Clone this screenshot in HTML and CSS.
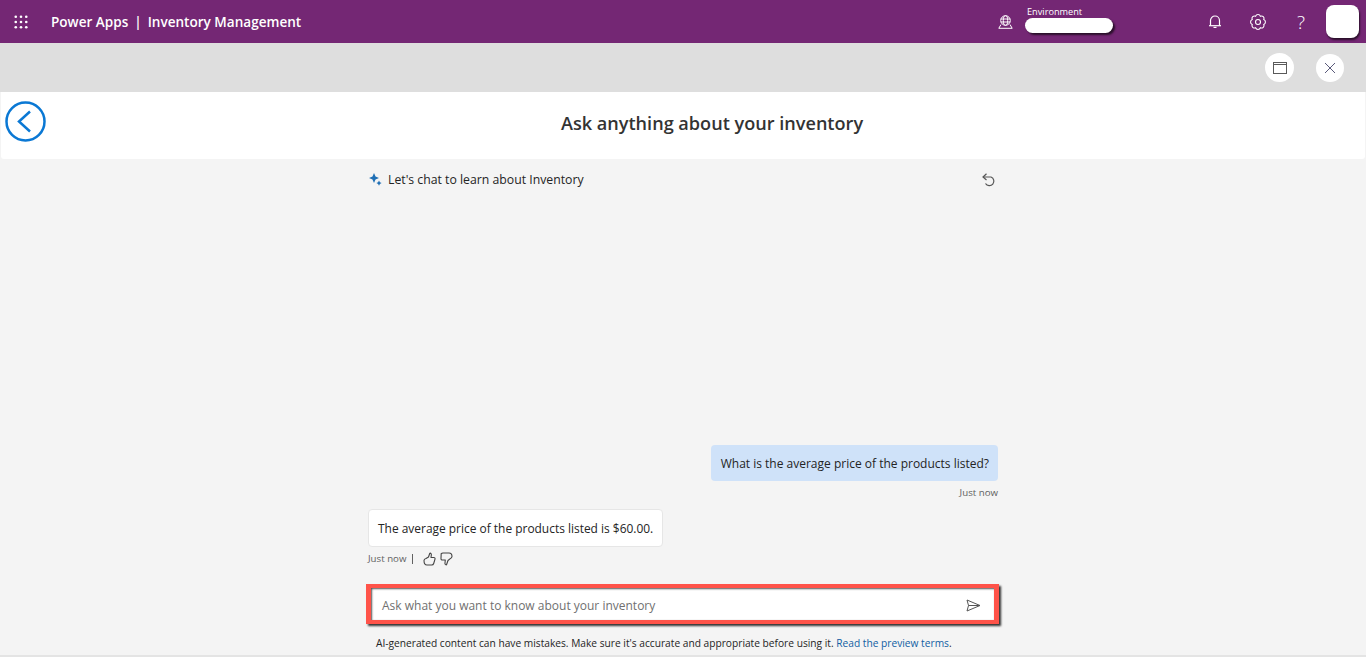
FILE: index.html
```html
<!DOCTYPE html>
<html lang="en">
<head>
<meta charset="utf-8">
<title>Inventory Management</title>
<link rel="stylesheet" href="styles.css">
</head>
<body>
<header class="topbar">
  <svg class="waffle" width="16" height="16" viewBox="0 0 16 16" fill="#fff"><circle cx="2" cy="2" r="1.5"/><circle cx="8" cy="2" r="1.5"/><circle cx="14" cy="2" r="1.5"/><circle cx="2" cy="8" r="1.5"/><circle cx="8" cy="8" r="1.5"/><circle cx="14" cy="8" r="1.5"/><circle cx="2" cy="14" r="1.5"/><circle cx="8" cy="14" r="1.5"/><circle cx="14" cy="14" r="1.5"/></svg>
  <div class="brand"><span>Power Apps</span><span class="sep">|</span><span>Inventory Management</span></div>
  <div class="env">
    <svg width="15" height="14" viewBox="0 0 15 14" fill="none" stroke="#fff" stroke-width="1"><circle cx="7.500" cy="5.500" r="4.800"/><ellipse cx="7.500" cy="5.500" rx="2.200" ry="4.800"/><path d="M2.800 4h9.400M2.800 7h9.400M3 9.500.8 13.300h13.400L12 9.500"/></svg>
    <div class="env-text"><div class="env-label">Environment</div><div class="env-pill"></div></div>
  </div>
  <div class="top-icons">
    <svg width="14" height="15" viewBox="0 0 14 15" fill="none" stroke="#fff" stroke-width="1.200"><path d="M2.500 11.500V6.500a4.500 4.500 0 0 1 9 0v5"/><path d="M1 11.700h12"/><path d="M5.500 13.400h3"/></svg>
    <svg width="16" height="16" viewBox="0 0 16 16" fill="none" stroke="#fff" stroke-width="1.100"><path d="M13.820 5.590A2.600 2.600 0 0 1 13.820 10.410 2.600 2.600 0 0 1 10.410 13.820 2.600 2.600 0 0 1 5.590 13.820 2.600 2.600 0 0 1 2.180 10.410 2.600 2.600 0 0 1 2.180 5.590 2.600 2.600 0 0 1 5.590 2.180 2.600 2.600 0 0 1 10.410 2.180 2.600 2.600 0 0 1 13.820 5.590Z"/><circle cx="8" cy="8" r="2.500"/></svg>
    <span class="help">?</span>
    <div class="avatar"></div>
  </div>
</header>
<div class="toolbar">
  <button class="round-btn round-wide" aria-label="Window"><svg width="14" height="12" viewBox="0 0 14 12" fill="none" stroke="#5a5a5a" stroke-width="1"><rect x=".5" y=".5" width="13" height="11"/><path d="M.5 2.500h13"/></svg></button>
  <button class="round-btn" aria-label="Close"><svg width="12" height="12" viewBox="0 0 12 12" stroke="#5a5a7a" stroke-width="1"><path d="M1 1l10 10M11 1 1 11"/></svg></button>
</div>
<section class="title-bar">
  <svg class="back" width="41" height="41" viewBox="0 0 41 41" fill="none" stroke="#0a78d4" stroke-width="2.500"><circle cx="20.500" cy="20.500" r="19"/><path d="M25 10.500 14 20.500l11 10"/></svg>
  <h1>Ask anything about your inventory</h1>
</section>
<main class="chat-page">
  <div class="chat">
    <div class="chat-head">
      <svg class="sparkle" width="13" height="13" viewBox="0 0 13 13" fill="#1f6fb5"><path d="M5 0l1.500 3.500L10 5 6.500 6.500 5 10 3.500 6.500 0 5l3.500-1.500z"/><path d="M10 7.500l.9 1.700 1.700.9-1.700.9-.9 1.700-.9-1.700-1.700-.9 1.700-.9z"/></svg>
      <span class="chat-title">Let's chat to learn about Inventory</span>
      <svg class="reset" width="16" height="15" viewBox="0 0 16 15" fill="none" stroke="#555" stroke-width="1.200"><path d="M2 4h8a4.500 4.500 0 1 1-5.500 6.500"/><path d="M5.500.8 2 4l3.500 3"/></svg>
    </div>
    <div class="messages">
      <div class="bubble bubble-user">What is the average price of the products listed?</div>
      <div class="meta meta-user">Just now</div>
      <div class="bubble bubble-bot">The average price of the products listed is $60.00.</div>
      <div class="meta meta-bot">
        <span>Just now</span><span class="bar"></span>
        <svg width="13" height="14" viewBox="0 0 13 14" fill="none" stroke="#444" stroke-width="1.100" stroke-linejoin="round"><path d="M1 8.500c0-1 .8-1.700 2-2l2.500-1.500L6.800 1.200c1.300-.2 1.700.8 1.500 2L8 5.500h2.800c1 0 1.500.7 1.200 1.700l-1.300 4.300c-.3 1-1 1.500-2 1.500H4c-2 0-3-1.500-3-4.500z"/></svg>
        <svg width="13" height="14" viewBox="0 0 13 14" fill="none" stroke="#444" stroke-width="1.100" stroke-linejoin="round"><path d="M1.200 1.500 3 1h6c2 0 3 1.500 3 3.500 0 1-.8 1.700-2 2.300L8 8.500 6.500 12.800c-1.300.2-1.700-.8-1.500-2L5.300 8H2.500c-1 0-1.700-.7-1.500-1.700z"/></svg>
      </div>
    </div>
    <div class="input-box">
      <span class="placeholder">Ask what you want to know about your inventory</span>
      <svg width="15" height="13" viewBox="0 0 15 13" fill="none" stroke="#555" stroke-width="1"><path d="M1 1l13 5.500L1 12l1.500-5.500zM2.500 6.500H14"/></svg>
    </div>
    <p class="disclaimer">AI-generated content can have mistakes. Make sure it's accurate and appropriate before using it. <a href="#">Read the preview terms</a>.</p>
  </div>
</main>
</body>
</html>
```

FILE: styles.css
```css
* { box-sizing: border-box; }
html, body { height: 100%; }
body {
  margin: 0;
  height: 657px;
  overflow: hidden;
  display: flex;
  flex-direction: column;
  background: #f4f4f4;
  font-family: "Open Sans", "Noto Sans", sans-serif;
  color: #242424;
}
.topbar {
  flex: 0 0 43px;
  height: 43px;
  background: #742774;
  color: #fff;
  display: flex;
  align-items: center;
  padding: 0 7px 0 14px;
}
.waffle { width: 14px; height: 14px; }
.brand {
  margin-left: 23px;
  font-size: 13.550px;
  font-weight: 600;
  display: flex;
  gap: 6px;
  white-space: nowrap;
}
.env { margin-left: auto; display: flex; align-items: center; gap: 12px; }
.env-label { font-size: 9.200px; line-height: 11px; margin: -4px 0 1px 2px; }
.env-pill {
  width: 88px;
  height: 15px;
  background: #fff;
  border-radius: 8px;
  box-shadow: 2px 2px 2px #2a0f2a;
}
.top-icons { margin-left: 95px; display: flex; align-items: center; }
.top-icons svg:nth-child(2) { margin-left: 28px; }
.help { margin-left: 31px; width: 11px; font-size: 19px; font-weight: 300; line-height: 20px; }
.avatar {
  margin-left: 18px;
  width: 33px;
  height: 33px;
  background: #fff;
  border-radius: 8px;
  box-shadow: 1px 2px 2px #2a0f2a;
}
.toolbar {
  flex: 0 0 49px;
  background: #dedede;
  display: flex;
  align-items: center;
  justify-content: flex-end;
  gap: 22px;
  padding: 0 22px 0 0;
}
.round-btn {
  width: 28px;
  height: 28px;
  border: 0;
  border-radius: 50%;
  background: #fff;
  padding: 0;
  display: flex;
  align-items: center;
  justify-content: center;
}
.round-wide { width: 29px; height: 29px; }
.title-bar {
  flex: 0 0 67px;
  margin: 0 1px;
  padding-left: 58px;
  background: #fff;
  border-radius: 0 0 3px 3px;
  display: flex;
  align-items: center;
  justify-content: center;
  position: relative;
}
.back { position: absolute; left: 4px; top: 9px; }
.title-bar h1 {
  margin: 0 0 6px;
  font-size: 18.100px;
  font-weight: 600;
  color: #333;
  line-height: 26px;
}
.chat-page {
  flex: 1;
  min-height: 0;
  display: flex;
  justify-content: center;
  border-bottom: 2px solid #e4e4e4;
}
.chat {
  width: 630px;
  display: flex;
  flex-direction: column;
}
.chat-head {
  display: flex;
  align-items: center;
  height: 22px;
  margin-top: 9px;
  gap: 6px;
}
.sparkle { margin-left: 1px; }
.chat-title { font-size: 12.250px; font-weight: 500; color: #242424; }
.reset { margin: 2px 1px 0 auto; }
.messages {
  flex: 1;
  display: flex;
  flex-direction: column;
  justify-content: flex-end;
}
.bubble {
  display: flex;
  align-items: center;
  font-size: 12px;
  line-height: 16px;
  padding: 0 10px;
  border-radius: 4px;
  color: #242424;
}
.bubble-user { align-self: flex-end; background: #cfe2f9; height: 36px; padding: 1px 9px 0 10px; }
.bubble-bot { align-self: flex-start; background: #fff; height: 38px; border: 1px solid #e6e6e6; font-size: 11.950px; padding: 2px 9px 0; }
.meta { font-size: 9.700px; color: #616161; line-height: 12px; }
.meta-user { align-self: flex-end; margin: 6px 0 10px; }
.meta-bot { display: flex; align-items: center; height: 12px; margin: 6px 0 19px; }
.bar { width: 1px; height: 10px; background: #616161; margin: 0 10px 0 6px; }
.meta-bot svg + svg { margin-left: 4px; }
.input-box {
  flex: 0 0 40px;
  margin: 0 -1px 0 -2px;
  background: #fff;
  border-style: solid;
  border-color: #ff5349;
  border-width: 4px 5px;
  box-shadow: 2px 2px 2px #333, inset 1px 1px 2px #555;
  display: flex;
  align-items: center;
  justify-content: space-between;
  padding: 2px 13px 0 11px;
}
.placeholder { font-size: 12px; color: #707070; }
.disclaimer {
  margin: 0;
  height: 31px;
  padding: 12px 0 0 8px;
  font-size: 10.200px;
  line-height: 14px;
  color: #242424;
  white-space: nowrap;
}
.disclaimer a { color: #115ea3; text-decoration: none; }
```
